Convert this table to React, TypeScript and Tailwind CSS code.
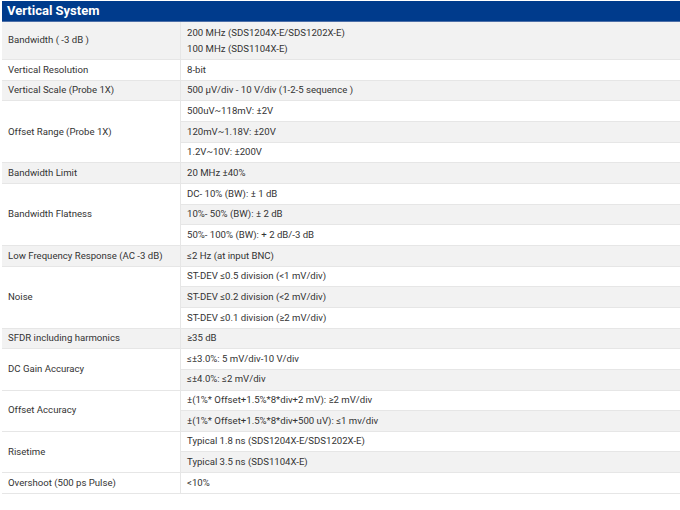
import React from 'react';

interface SpecRow {
  label: string;
  values: string[];
  // true when all values sit in one cell, one per line
  stacked?: boolean;
}

const specs: SpecRow[] = [
  { label: 'Bandwidth ( -3 dB )', values: ['200 MHz (SDS1204X-E/SDS1202X-E)', '100 MHz (SDS1104X-E)'], stacked: true },
  { label: 'Vertical Resolution', values: ['8-bit'] },
  { label: 'Vertical Scale (Probe 1X)', values: ['500 μV/div - 10 V/div (1-2-5 sequence )'] },
  { label: 'Offset Range (Probe 1X)', values: ['500uV~118mV: ±2V', '120mV~1.18V: ±20V', '1.2V~10V: ±200V'] },
  { label: 'Bandwidth Limit', values: ['20 MHz ±40%'] },
  { label: 'Bandwidth Flatness', values: ['DC- 10% (BW): ± 1 dB', '10%- 50% (BW): ± 2 dB', '50%- 100% (BW): + 2 dB/-3 dB'] },
  { label: 'Low Frequency Response (AC -3 dB)', values: ['≤2 Hz (at input BNC)'] },
  { label: 'Noise', values: ['ST-DEV ≤0.5 division (<1 mV/div)', 'ST-DEV ≤0.2 division (<2 mV/div)', 'ST-DEV ≤0.1 division (≥2 mV/div)'] },
  { label: 'SFDR including harmonics', values: ['≥35 dB'] },
  { label: 'DC Gain Accuracy', values: ['≤±3.0%: 5 mV/div-10 V/div', '≤±4.0%: ≤2 mV/div'] },
  { label: 'Offset Accuracy', values: ['±(1%* Offset+1.5%*8*div+2 mV): ≥2 mV/div', '±(1%* Offset+1.5%*8*div+500 uV): ≤1 mv/div'] },
  { label: 'Risetime', values: ['Typical 1.8 ns (SDS1204X-E/SDS1202X-E)', 'Typical 3.5 ns (SDS1104X-E)'] },
  { label: 'Overshoot (500 ps Pulse)', values: ['<10%'] },
];

const spanClass: Record<number, string> = {
  1: 'row-span-1',
  2: 'row-span-2',
  3: 'row-span-3',
};

const stripe = (i: number) => (i % 2 === 0 ? 'bg-[#f2f2f2]' : 'bg-white');

export default function App() {
  let line = 0;
  const cells: React.ReactNode[] = [];

  specs.forEach((row) => {
    const span = row.stacked ? 1 : row.values.length;
    cells.push(
      <div
        key={row.label}
        className={`${spanClass[span]} ${stripe(line)} flex items-center px-[6px] border-b border-r border-[#e6e6e6]`}
      >
        {row.label}
      </div>
    );
    if (row.stacked) {
      cells.push(
        <div key={row.label + '-v'} className={`${stripe(line)} flex flex-col justify-center px-[6px] border-b border-[#e6e6e6] leading-4`}>
          {row.values.map((v) => (
            <span key={v}>{v}</span>
          ))}
        </div>
      );
      line += 1;
    } else {
      row.values.forEach((v) => {
        cells.push(
          <div key={row.label + v} className={`${stripe(line)} flex items-center px-[6px] border-b border-[#e6e6e6]`}>
            {v}
          </div>
        );
        line += 1;
      });
    }
  });

  return (
    <div className="bg-white min-h-screen w-[680px] h-[510px] pl-[2px] pt-[1px] font-['Roboto',sans-serif] overflow-hidden">
      <div className="h-[21px] bg-[#003b8c] border-b border-[#4d6fa8] flex items-center px-[5px]">
        <h2 className="text-white font-bold text-[13px]">Vertical System</h2>
      </div>
      <div className="grid grid-cols-[179px_1fr] grid-rows-[38px_repeat(21,20.67px)] text-[9.6px] text-[#333]">
        {cells}
      </div>
    </div>
  );
}
